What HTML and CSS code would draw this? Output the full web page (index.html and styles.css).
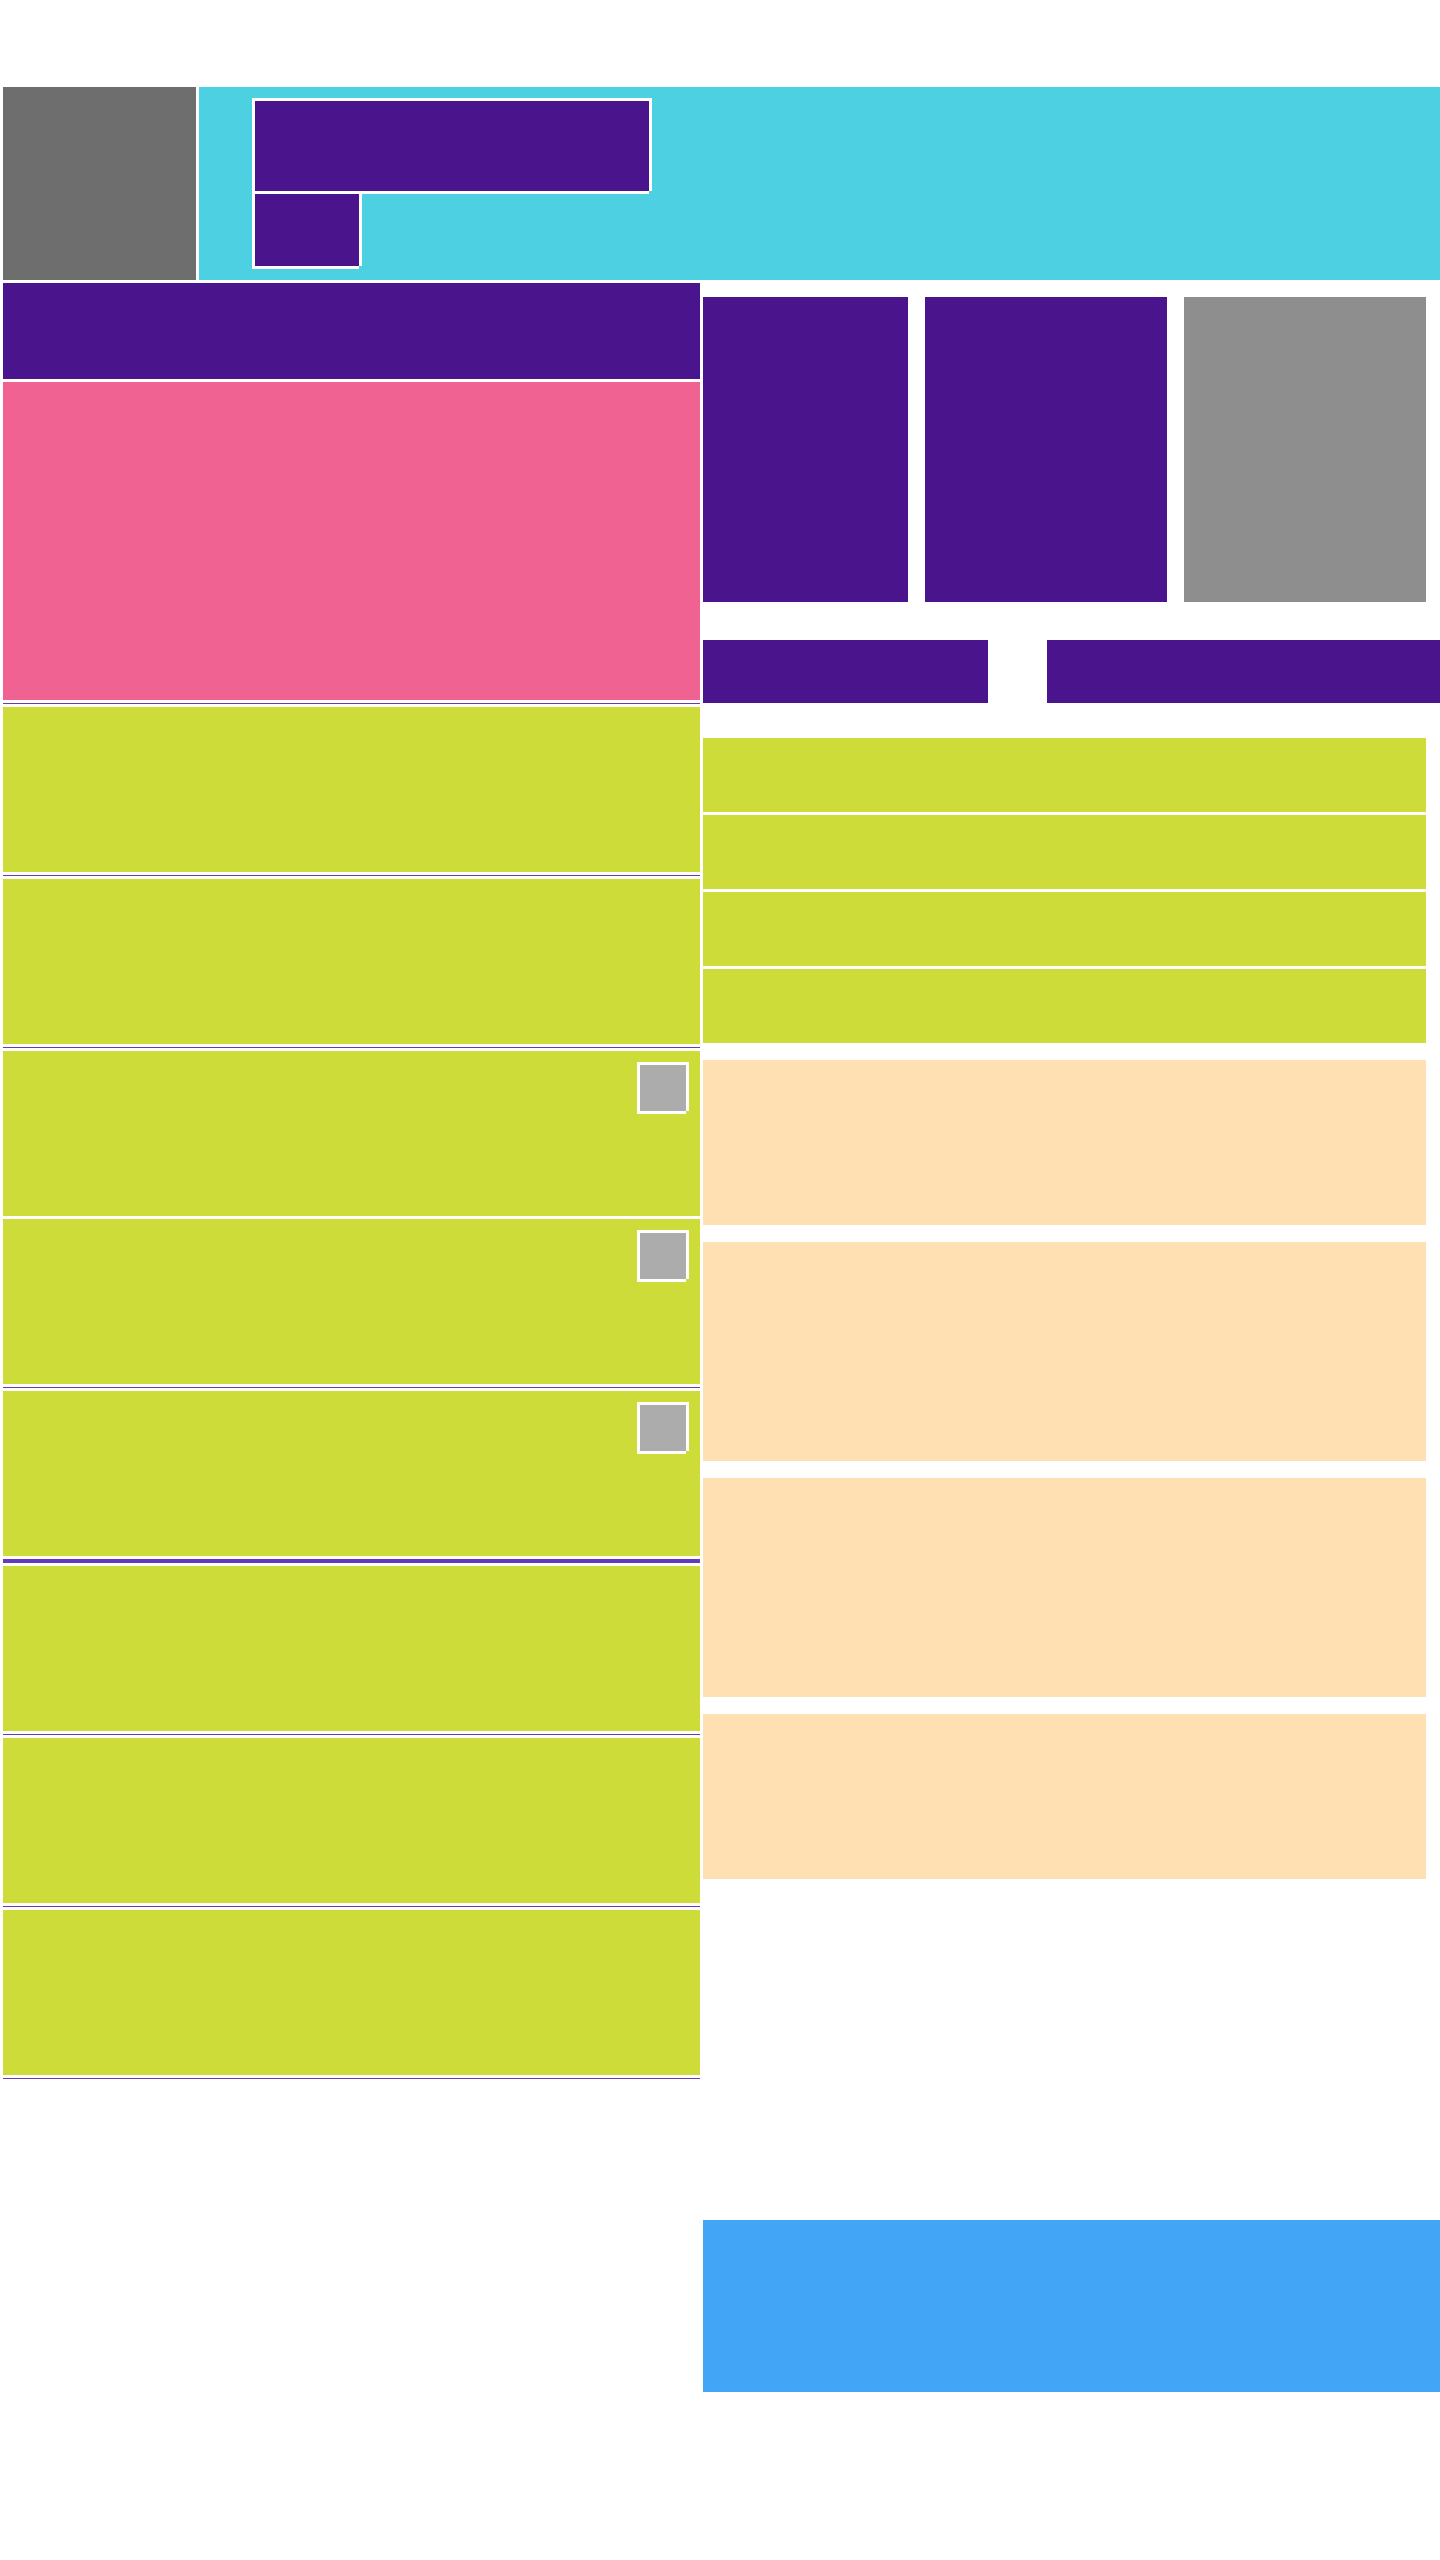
FILE: index.html
```html
<!DOCTYPE html>
<html lang="en">
<head>
<meta charset="utf-8">
<meta name="viewport" content="width=device-width, initial-scale=1">
<link rel="stylesheet" href="styles.css">
</head>
<body>
<div class="page">
  <header class="header">
    <div class="logo"></div>
    <div class="banner">
      <div class="block title"></div>
      <div class="block subtitle"></div>
    </div>
  </header>
  <div class="columns">
    <main class="feed">
      <div class="feed-heading"></div>
      <div class="feature"></div>
      <div class="divider"></div>
      <div class="item"></div>
      <div class="divider"></div>
      <div class="item"></div>
      <div class="divider"></div>
      <div class="item"><div class="block badge"></div></div>
      <div class="item"><div class="block badge"></div></div>
      <div class="divider"></div>
      <div class="item"><div class="block badge"></div></div>
      <div class="divider divider-thick"></div>
      <div class="item"></div>
      <div class="divider"></div>
      <div class="item"></div>
      <div class="divider"></div>
      <div class="item"></div>
      <div class="divider"></div>
    </main>
    <aside class="side">
      <div class="cards">
        <div class="card card-first"></div>
        <div class="card"></div>
        <div class="card card-muted"></div>
      </div>
      <div class="tabs">
        <div class="tab"></div>
        <div class="tab tab-wide"></div>
      </div>
      <div class="rows">
        <div class="row"></div>
        <div class="row"></div>
        <div class="row"></div>
        <div class="row"></div>
      </div>
      <div class="panels">
        <div class="panel"></div>
        <div class="panel panel-tall"></div>
        <div class="panel panel-tall"></div>
        <div class="panel"></div>
      </div>
      <footer class="footer"></footer>
    </aside>
  </div>
</div>
</body>
</html>
```
FILE: styles.css
```css
* {
  box-sizing: border-box;
}

body {
  margin: 0;
  background: #ffffff;
  font-family: Roboto, sans-serif;
}

.page {
  display: flex;
  flex-direction: column;
  gap: 3px;
  min-height: 100vh;
  padding: 87px 0 0 3px;
}

.header {
  display: flex;
  gap: 3px;
}

.logo {
  flex: none;
  width: 193px;
  background: #6e6e6e;
}

.banner {
  display: flex;
  flex: 1;
  flex-direction: column;
  gap: 3px;
  padding: 14px 56px;
  background: #4dd0e1;
}

/* White outline with the bottom right corner left open */
.block {
  box-shadow:
    -3px -3px #ffffff,
    3px -3px #ffffff,
    -3px 3px #ffffff,
    3px 0 #ffffff,
    0 3px #ffffff;
}

.title {
  width: 394px;
  max-width: 100%;
  height: 90px;
  background: #4a148c;
}

.subtitle {
  width: 104px;
  height: 72px;
  background: #4a148c;
}

.columns {
  display: grid;
  grid-template-columns: minmax(0, 697fr) minmax(0, 737fr);
  gap: 3px;
}

.feed {
  display: flex;
  flex-direction: column;
  gap: 3px;
}

.feed-heading {
  height: 96px;
  background: #4a148c;
}

.feature {
  height: 318px;
  background: #f06292;
}

.divider {
  height: 1px;
  background: #673ab7;
}

.divider-thick {
  height: 4px;
}

.item {
  display: flex;
  justify-content: flex-end;
  height: 165px;
  padding: 14px;
  background: #cddc39;
}

.badge {
  width: 46px;
  height: 46px;
  background: #acacac;
}

.side {
  display: flex;
  flex-direction: column;
  padding-top: 14px;
}

.cards {
  display: flex;
  gap: 17px;
  padding-right: 14px;
}

.card {
  flex: 242 1 0;
  height: 305px;
  background: #4a148c;
}

.card-first {
  flex-grow: 205;
}

.card-muted {
  background: #8e8e8e;
}

.tabs {
  display: flex;
  gap: 59px;
  margin-top: 38px;
}

.tab {
  flex: 285 1 0;
  height: 63px;
  background: #4a148c;
}

.tab-wide {
  flex-grow: 393;
}

.rows {
  display: flex;
  flex-direction: column;
  gap: 3px;
  margin-top: 35px;
  padding-right: 14px;
}

.row {
  height: 74px;
  background: #cddc39;
}

.panels {
  display: flex;
  flex-direction: column;
  gap: 17px;
  margin-top: 17px;
  padding-right: 14px;
}

.panel {
  height: 165px;
  background: #ffe0b2;
}

.panel-tall {
  height: 219px;
}

.footer {
  height: 172px;
  margin-top: 341px;
  background: #42a5f5;
}
```
